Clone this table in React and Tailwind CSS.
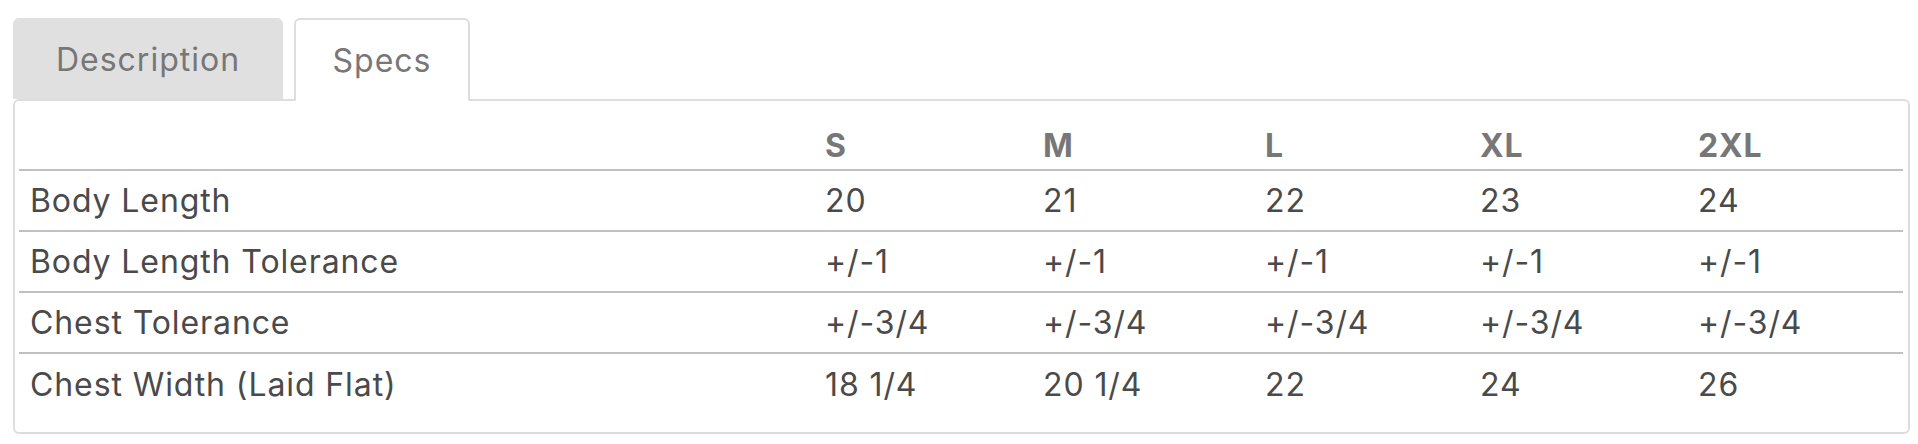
import React from "react";

const sizes = ["S", "M", "L", "XL", "2XL"];
const rows = [
  ["Body Length", "20", "21", "22", "23", "24"],
  ["Body Length Tolerance", "+/-1", "+/-1", "+/-1", "+/-1", "+/-1"],
  ["Chest Tolerance", "+/-3/4", "+/-3/4", "+/-3/4", "+/-3/4", "+/-3/4"],
  ["Chest Width (Laid Flat)", "18 1/4", "20 1/4", "22", "24", "26"],
];

const cols = "grid grid-cols-[806px_218px_222px_215px_218px_1fr]";

export default function App() {
  return (
    <div
      className="w-[1918px] h-[444px] bg-white pl-[13px] pt-[18px] text-[32px] tracking-[0.9px]"
      style={{ fontFamily: "Inter, 'Noto Sans', sans-serif" }}
    >
      <div className="flex items-start gap-[11px] h-[81px]">
        <div className="w-[270px] h-[81px] bg-[#e0e0e0] rounded-t-[6px] flex items-center justify-center text-[#777777] leading-[32px] pt-[3px] tracking-[1px]">
          Description
        </div>
        <div className="relative z-10 w-[176px] h-[83px] bg-white border-2 border-b-0 border-[#dddddd] rounded-t-[6px] flex items-center justify-center text-[#777777] leading-[32px] pt-[1px] tracking-[1px]">
          Specs
        </div>
      </div>
      <div className="w-[1897px] h-[335px] border-2 border-[#dddddd] rounded-[6px] pl-[4px] pr-[5px] pt-[4px]">
        <div className={`${cols} h-[66px] border-b-2 border-[#c0c0c0] items-end pb-[7px] font-bold text-[#777777] leading-[32px]`}>
          <div className="pl-[11px]"></div>
          {sizes.map((s) => (
            <div key={s}>{s}</div>
          ))}
        </div>
        {rows.map((r, i) => (
          <div
            key={i}
            className={`${cols} h-[61px] items-center text-[#4a4a4a] leading-[32px] ${
              i < rows.length - 1 ? "border-b-2 border-[#c0c0c0]" : ""
            }`}
          >
            <div className="pl-[11px]">{r[0]}</div>
            {r.slice(1).map((v, j) => (
              <div key={j}>{v}</div>
            ))}
          </div>
        ))}
      </div>
    </div>
  );
}
